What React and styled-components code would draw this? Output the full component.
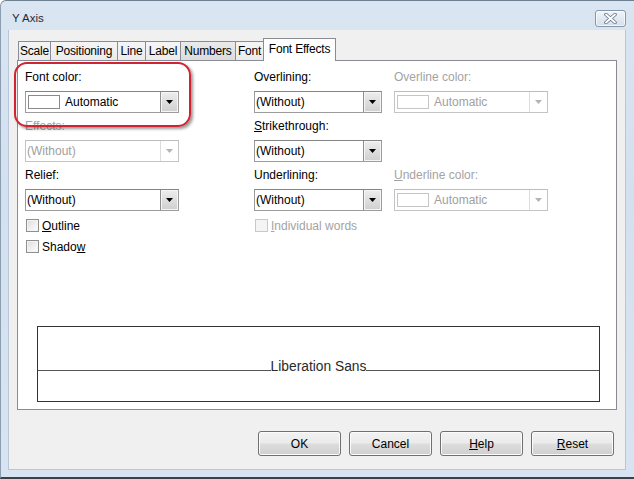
import React from "react";
import styled, { createGlobalStyle } from "styled-components";

const Global = createGlobalStyle`
  html, body { margin: 0; padding: 0; background: #ffffff; }
  body { font-family: "Liberation Sans", Arial, sans-serif; font-size: 12px; color: #000; }
  * { box-sizing: border-box; }
`;

const Window = styled.div`
  width: 634px;
  height: 479px;
  display: flex;
  flex-direction: column;
  background: linear-gradient(180deg, #dae5f2 0%, #d3e0ef 40%, #d8e4f1 100%);
  border-top: 1px solid #6f7f92;
  border-left: 1px solid #8d9db0;
  border-bottom: 2px solid #3d4046;
  border-top-left-radius: 6px;
  overflow: hidden;
`;

const TitleBar = styled.div`
  height: 29px;
  flex: none;
  display: flex;
  align-items: center;
  justify-content: space-between;
  padding: 5px 8px 0 11px;
`;

const Title = styled.span`
  font-size: 11.5px;
  color: #1c2a3a;
`;

const CloseButton = styled.div`
  width: 31px;
  height: 17px;
  border: 1px solid #8797ab;
  border-radius: 3px;
  background: linear-gradient(180deg, #f1f5fa 0%, #e2e9f2 50%, #d4dfeb 100%);
  display: flex;
  align-items: center;
  justify-content: center;
  box-shadow: inset 0 0 0 1px rgba(255, 255, 255, 0.7);
`;

const Client = styled.div`
  flex: 1;
  margin: 0 8px 7px 7px;
  background: #f0f0f0;
  border: 1px solid #b7c6d8;
  border-top: none;
  padding: 8px 8px 13px 8px;
  display: flex;
  flex-direction: column;
`;

const TabStrip = styled.div`
  height: 22px;
  display: flex;
  align-items: flex-end;
  padding-left: 1px;
  position: relative;
  z-index: 2;
`;

const Tab = styled.div`
  width: ${(p) => p.$width}px;
  height: ${(p) => (p.$active ? "23px" : "19px")};
  margin-bottom: ${(p) => (p.$active ? "-1px" : "0")};
  margin-left: ${(p) => (p.$first ? "0" : "-1px")};
  padding-bottom: ${(p) => (p.$active ? "3px" : "0")};
  border: 1px solid #898c95;
  border-bottom: none;
  background: ${(p) =>
    p.$active
      ? "#ffffff"
      : p.$hover
      ? "linear-gradient(180deg, #eaeaea 0%, #dcdcdc 100%)"
      : "linear-gradient(180deg, #f5f5f5 0%, #ebebeb 100%)"};
  display: flex;
  align-items: center;
  justify-content: center;
  white-space: nowrap;
  letter-spacing: -0.2px;
  position: relative;
  z-index: ${(p) => (p.$active ? 2 : 1)};
`;

const Panel = styled.div`
  width: 600px;
  height: 350px;
  flex: none;
  border: 1px solid #898c95;
  background: #ffffff;
  position: relative;
  display: flex;
  flex-direction: column;
  padding: 9px 0 7px 7px;
`;

const Highlight = styled.div`
  position: absolute;
  left: -4px;
  top: 1px;
  width: 177px;
  height: 65px;
  border: 2.5px solid #cf2431;
  border-radius: 13px;
  box-shadow: 2px 2px 3px rgba(0, 0, 0, 0.4);
  pointer-events: none;
  z-index: 3;
`;

const FieldGrid = styled.div`
  display: grid;
  grid-template-columns: 229px 140px 154px;
  grid-auto-rows: 43px;
  row-gap: 6px;
`;

const Field = styled.div`
  display: flex;
  flex-direction: column;
  width: ${(p) => p.$width}px;
`;

const Label = styled.div`
  height: 15px;
  line-height: 15px;
  margin-bottom: 6px;
  white-space: nowrap;
  color: ${(p) => (p.$disabled ? "#a3a3a3" : "#000")};
`;

const Mnemonic = styled.span`
  text-decoration: underline;
  text-underline-offset: 1px;
`;

const ListBox = styled.div`
  height: 22px;
  display: flex;
  align-items: stretch;
  border: 1px solid ${(p) => (p.$disabled ? "#c4c4c4" : "#9c9c9c")};
  border-top-color: ${(p) => (p.$disabled ? "#bdbdbd" : "#848484")};
  background: #ffffff;
  color: ${(p) => (p.$disabled ? "#a0a0a0" : "#000")};
`;

const ListValue = styled.div`
  flex: 1;
  display: flex;
  align-items: center;
  padding-left: ${(p) => (p.$swatch ? "2px" : "1px")};
  white-space: nowrap;
  overflow: hidden;
`;

const Swatch = styled.span`
  width: 32px;
  height: 14px;
  flex: none;
  border: 1px solid ${(p) => (p.$disabled ? "#c6c6c6" : "#8a8a8a")};
  background: #ffffff;
  margin-right: 5px;
`;

const DropButton = styled.div`
  width: 18px;
  flex: none;
  display: flex;
  align-items: center;
  justify-content: center;
  ${(p) =>
    p.$disabled
      ? `
    border-left: 1px solid #dcdcdc;
    background: #ffffff;
  `
      : `
    border-left: 1px solid #8e8e8e;
    background: linear-gradient(180deg, #eeeeee 0%, #dedede 50%, #cfcfcf 100%);
    box-shadow: inset 0 0 0 1px #f6f6f6;
  `}
`;

const CheckGrid = styled.div`
  display: grid;
  grid-template-columns: 229px 140px 154px;
  grid-auto-rows: 21px;
  margin-top: 4px;
`;

const CheckRow = styled.div`
  display: flex;
  align-items: center;
  white-space: nowrap;
  color: ${(p) => (p.$disabled ? "#a3a3a3" : "#000")};
`;

const CheckBox = styled.span`
  width: 13px;
  height: 13px;
  flex: none;
  margin: 0 3px 0 1px;
  border: 1px solid ${(p) => (p.$disabled ? "#c9c9c9" : "#8e8f8f")};
  background: ${(p) =>
    p.$disabled ? "#f4f4f4" : "linear-gradient(135deg, #dcdcdc 0%, #f2f2f2 60%, #fbfbfb 100%)"};
  box-shadow: inset 0 0 0 1px #f4f4f4;
`;

const Preview = styled.div`
  margin-top: auto;
  margin-left: 12px;
  width: 563px;
  height: 76px;
  border: 1px solid #333333;
  background: #ffffff;
`;

const PreviewRow = styled.div`
  height: 44px;
  display: flex;
  align-items: flex-end;
`;

const Baseline = styled.div`
  flex: 1;
  height: 1px;
  background: #555555;
`;

const PreviewText = styled.span`
  font-size: 13.8px;
  line-height: 14px;
  margin-bottom: -3px;
  color: #2a2a2a;
  white-space: nowrap;
`;

const ButtonRow = styled.div`
  display: flex;
  justify-content: flex-end;
  gap: 8px;
  margin-top: 21px;
  padding-right: 3px;
`;

const Button = styled.div`
  width: 83px;
  height: 25px;
  border: 1px solid #707070;
  border-radius: 3px;
  background: linear-gradient(180deg, #f2f2f2 0%, #ebebeb 48%, #dddddd 52%, #cfcfcf 100%);
  box-shadow: inset 0 0 0 1px #fbfbfb;
  display: flex;
  align-items: center;
  justify-content: center;
  color: #000;
`;

const Arrow = ({ disabled }) => (
  <svg width="7" height="4" viewBox="0 0 7 4">
    <path d="M0 0 H7 L3.5 4 Z" fill={disabled ? "#b4b4b4" : "#000"} />
  </svg>
);

const CloseGlyph = () => (
  <svg width="13" height="11" viewBox="0 0 13 11">
    <path d="M2 1.5 L11 9.5 M11 1.5 L2 9.5" stroke="#6b788a" strokeWidth="3.6" strokeLinecap="round" />
    <path d="M2 1.5 L11 9.5 M11 1.5 L2 9.5" stroke="#ffffff" strokeWidth="1.8" strokeLinecap="round" />
  </svg>
);

const Select = ({ value, swatch, disabled }) => (
  <ListBox $disabled={disabled}>
    <ListValue $swatch={swatch}>
      {swatch && <Swatch $disabled={disabled} />}
      {value}
    </ListValue>
    <DropButton $disabled={disabled}>
      <Arrow disabled={disabled} />
    </DropButton>
  </ListBox>
);

const tabs = [
  { label: "Scale", width: 33 },
  { label: "Positioning", width: 68 },
  { label: "Line", width: 29 },
  { label: "Label", width: 36 },
  { label: "Numbers", width: 56 },
  { label: "Font", width: 29 },
  { label: "Font Effects", width: 73 },
];

export default function App() {
  return (
    <>
      <Global />
      <Window>
        <TitleBar>
          <Title>Y Axis</Title>
          <CloseButton>
            <CloseGlyph />
          </CloseButton>
        </TitleBar>
        <Client>
          <TabStrip>
            {tabs.map((t, i) => (
              <Tab
                key={t.label}
                $width={t.width}
                $first={i === 0}
                $active={t.label === "Font Effects"}
                $hover={t.label === "Numbers"}
              >
                {t.label}
              </Tab>
            ))}
          </TabStrip>
          <Panel>
            <Highlight />
            <FieldGrid>
              <Field $width={154}>
                <Label>Font color:</Label>
                <Select value="Automatic" swatch />
              </Field>
              <Field $width={128}>
                <Label>Overlining:</Label>
                <Select value="(Without)" />
              </Field>
              <Field $width={154}>
                <Label $disabled>Overline color:</Label>
                <Select value="Automatic" swatch disabled />
              </Field>

              <Field $width={154}>
                <Label $disabled>Effects:</Label>
                <Select value="(Without)" disabled />
              </Field>
              <Field $width={128}>
                <Label>
                  <Mnemonic>S</Mnemonic>trikethrough:
                </Label>
                <Select value="(Without)" />
              </Field>
              <div />

              <Field $width={154}>
                <Label>Relief:</Label>
                <Select value="(Without)" />
              </Field>
              <Field $width={128}>
                <Label>Underlining:</Label>
                <Select value="(Without)" />
              </Field>
              <Field $width={154}>
                <Label $disabled>
                  <Mnemonic>U</Mnemonic>nderline color:
                </Label>
                <Select value="Automatic" swatch disabled />
              </Field>
            </FieldGrid>
            <CheckGrid>
              <CheckRow>
                <CheckBox />
                <span>
                  <Mnemonic>O</Mnemonic>utline
                </span>
              </CheckRow>
              <CheckRow $disabled>
                <CheckBox $disabled />
                <span>
                  <Mnemonic>I</Mnemonic>ndividual words
                </span>
              </CheckRow>
              <div />
              <CheckRow>
                <CheckBox />
                <span>
                  Shado<Mnemonic>w</Mnemonic>
                </span>
              </CheckRow>
            </CheckGrid>
            <Preview>
              <PreviewRow>
                <Baseline />
                <PreviewText>Liberation Sans</PreviewText>
                <Baseline />
              </PreviewRow>
            </Preview>
          </Panel>
          <ButtonRow>
            <Button>OK</Button>
            <Button>Cancel</Button>
            <Button>
              <Mnemonic>H</Mnemonic>elp
            </Button>
            <Button>
              <Mnemonic>R</Mnemonic>eset
            </Button>
          </ButtonRow>
        </Client>
      </Window>
    </>
  );
}
